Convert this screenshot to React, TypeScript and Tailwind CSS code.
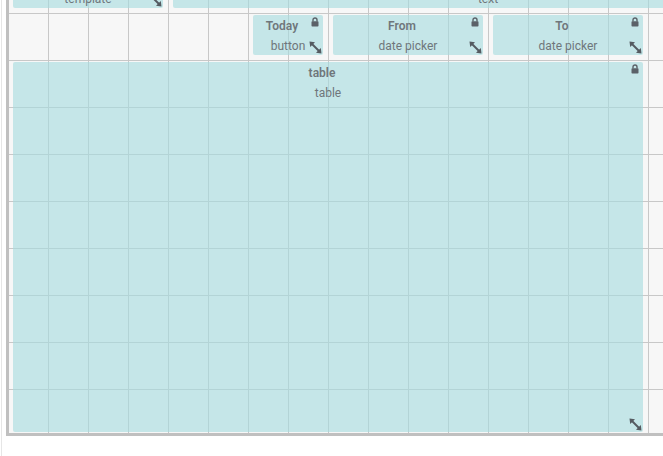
import React from "react";

type W = {
  left: number;
  top: number;
  w: number;
  h: number;
  title?: string;
  sub: string;
  lock?: boolean;
};

const widgets: W[] = [
  { left: 5, top: -32, w: 150, h: 40, sub: "template" },
  { left: 165, top: -32, w: 630, h: 40, sub: "text" },
  { left: 245, top: 15, w: 70, h: 40, title: "Today", sub: "button", lock: true },
  { left: 325, top: 15, w: 150, h: 40, title: "From", sub: "date picker", lock: true },
  { left: 485, top: 15, w: 150, h: 40, title: "To", sub: "date picker", lock: true },
  { left: 5, top: 62, w: 630, h: 370, title: "table", sub: "table", lock: true },
];

function Lock() {
  return (
    <svg width="8" height="10" viewBox="0 0 8 10" className="absolute top-[2px] right-[4px]">
      <path d="M2 4.6V3a2 2 0 0 1 4 0v1.6" fill="none" stroke="#5b6168" strokeWidth="1.4" />
      <rect x="0.5" y="4.3" width="7" height="5.2" rx="0.8" fill="#5b6168" />
    </svg>
  );
}

function Resize() {
  return (
    <svg width="13" height="13" viewBox="0 0 13 13" className="absolute right-[1px] bottom-[1px]">
      <line x1="3" y1="3" x2="10" y2="10" stroke="#555b61" strokeWidth="2" />
      <polygon points="0.5,0.5 6,1.2 1.2,6" fill="#555b61" />
      <polygon points="12.5,12.5 7,11.8 11.8,7" fill="#555b61" />
    </svg>
  );
}

export default function App() {
  return (
    <div className="relative w-[663px] h-[456px] bg-white overflow-hidden font-['Roboto',sans-serif]">
      <div className="absolute left-[1px] top-0 w-px h-full bg-[#e6e6e6]" />
      <div className="absolute left-[6px] top-0 w-[800px] h-[436px] border-l-[3px] border-b-[3px] border-[#c0c0c0] bg-[#f7f7f7] overflow-hidden">
        <div className="absolute left-[-1px] top-0 w-[900px] h-[500px] bg-[linear-gradient(to_right,#c8c8c8_1px,transparent_1px),linear-gradient(to_bottom,#c8c8c8_1px,transparent_1px)] bg-[size:40px_47px] bg-[position:0px_13px]">
          {widgets.map((w, i) => (
            <div
              key={i}
              className="absolute rounded-[2px] bg-[rgba(166,219,223,0.62)] flex flex-col items-center pt-[3px] text-[#6f767b] text-xs"
              style={{ left: w.left, top: w.top, width: w.w, height: w.h }}
            >
              <div className="leading-4 font-semibold pr-3">{w.title ?? "\u00a0"}</div>
              <div className="leading-4 mt-1">{w.sub}</div>
              {w.lock && <Lock />}
              <Resize />
            </div>
          ))}
        </div>
      </div>
    </div>
  );
}
